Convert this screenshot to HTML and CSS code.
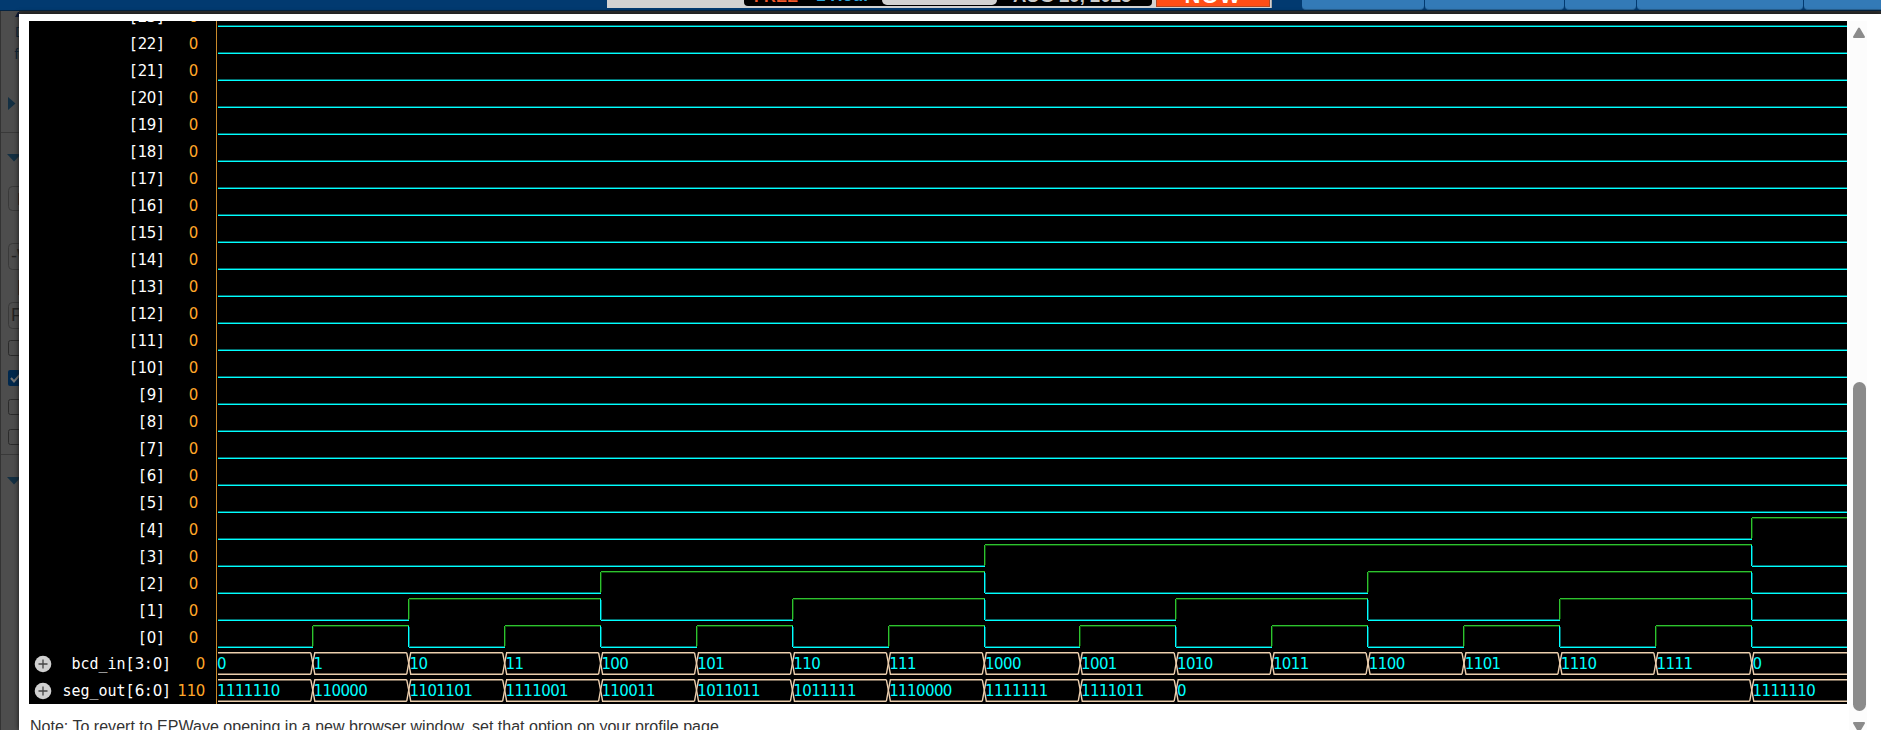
FILE: index.html
```html
<!DOCTYPE html>
<html lang="en">
<head>
<meta charset="utf-8">
<title>EPWave</title>
<link rel="stylesheet" href="styles.css">
</head>
<body>
<header class="topbar">
  <div class="ad">
    <div class="ad-strip"><span class="ad-free">FREE</span><span class="ad-hour">1 Hour</span><span class="ad-pill"></span><span class="ad-date">AUG 29, 2025</span></div>
    <div class="ad-cta"><span>NOW</span></div>
  </div>
  <nav class="tabs"><i class="t1"></i><i class="t2"></i><i class="t3"></i><i class="t4"></i><i class="t5"></i></nav>
</header>
<svg class="sidebar" width="19" height="719" viewBox="0 11 19 719">
  <path d="M.5 11V730" stroke="#333"/>
  <path d="M15 17l3-5h1v5z" fill="#0a1633"/>
  <text x="15" y="37" class="side-link">D</text>
  <text x="14.500" y="59" class="side-link">fi</text>
  <path d="M8 97l7.500 6.500L8 110zM7 154h14l-7 7.500zM7 477h14l-7 7.500z" fill="#132f42"/>
  <path d="M1 132.500H19M1 454.500H19" stroke="#393939"/>
  <g fill="none" stroke="#393939"><rect x="8.500" y="186.500" width="40" height="24" rx="4"/><rect x="8.500" y="243.500" width="40" height="26" rx="4"/><rect x="8.500" y="302.500" width="40" height="26" rx="4"/></g>
  <path d="M18.500 193v12M18.500 280v15" stroke="#402a20"/>
  <text x="11" y="262" class="side-input">-W</text>
  <text x="11" y="321" class="side-input">F</text>
  <g fill="none" stroke="#2b2b2b"><rect x="8.500" y="340.500" width="15" height="15" rx="2"/><rect x="8.500" y="399.500" width="15" height="15" rx="2"/><rect x="8.500" y="429.500" width="15" height="15" rx="2"/></g>
  <rect x="8" y="370" width="16" height="16" rx="2" fill="#00284d"/>
  <path d="M11 378l3 3.500 7-8" stroke="#777" stroke-width="2" fill="none"/>
</svg>
<main class="modal">
  <section class="waves"><div class="rows" id="rows"></div></section>
  <p class="note">Note: To revert to EPWave opening in a new browser window, set that option on your profile page</p>
  <div class="scrollbar">
    <svg class="arrow-up" width="14" height="12" viewBox="0 0 14 12"><path d="M7 1.500L12 10H2z" fill="#8b8b8b" stroke="#8b8b8b" stroke-width="2" stroke-linejoin="round"/></svg>
    <div class="thumb"></div>
    <svg class="arrow-down" width="14" height="12" viewBox="0 0 14 12"><path d="M7 10.500L12 2H2z" fill="#8b8b8b" stroke="#8b8b8b" stroke-width="2" stroke-linejoin="round"/></svg>
  </div>
</main>
<script src="waves.js"></script>
</body>
</html>
```
FILE: styles.css
```css
body { margin: 0; width: 1881px; height: 730px; overflow: hidden; background: #4d4d4d; position: relative; font-family: "Liberation Sans", Arial, sans-serif; }

.topbar { box-sizing: border-box; height: 11px; display: flex; background: #023a70; border-bottom: 1px solid #052442; overflow: hidden; padding-left: 607px; }
.ad { flex: none; box-sizing: border-box; width: 665px; height: 8px; background: #d2d2d2; display: flex; padding-left: 137px; border-right: 1px solid #aaa; overflow: hidden; }
.ad-strip { flex: none; display: flex; width: 408px; height: 6px; background: #000; border-radius: 0 0 4px 4px; overflow: hidden; white-space: nowrap; }
.ad-free, .ad-hour, .ad-date { flex: none; box-sizing: border-box; height: 20px; margin-top: -14px; font-weight: bold; line-height: 20px; }
.ad-free { width: 64px; padding-left: 10px; color: #f2592b; font-size: 16.500px; }
.ad-hour { width: 74px; padding-left: 8px; color: #2ba8e0; font-size: 17px; }
.ad-pill { flex: none; width: 115px; height: 5px; background: #d2d2d2; border-radius: 0 0 9px 9px; }
.ad-date { padding-left: 16px; color: #ccc; font-size: 18.500px; }
.ad-cta { flex: none; box-sizing: border-box; margin-left: 4px; width: 114px; height: 7px; border: 1px solid #b34a25; border-top: 0; background: #ff4e16; color: #fff; text-align: center; overflow: hidden; }
.ad-cta span { display: block; margin-top: -16px; font: bold 22px/24px "Liberation Sans", sans-serif; letter-spacing: 1px; }
.tabs { flex: none; display: flex; gap: 1px; margin-left: 30px; }
.tabs i { height: 10px; background: #337ab7; border-radius: 0 0 4px 4px; box-sizing: border-box; border-bottom: 1px solid #286090; }
.t1 { width: 122px; }
.t2 { width: 139px; }
.t3 { width: 71px; }
.t4 { width: 166px; }
.t5 { width: 90px; }

.sidebar { display: block; }
.side-link { font: 14px "Liberation Sans", sans-serif; fill: #0f2537; }
.side-input { font: 18px "Liberation Sans", sans-serif; fill: #222; }

.modal { position: absolute; left: 19px; top: 14px; width: 1862px; height: 716px; background: #fff; box-shadow: 0 0 5px #111, 0 -3px 0 #303030; box-sizing: border-box; padding: 7px 0 0 10px; }
.waves { width: 1818px; height: 683px; background: #000; overflow: hidden; }
.rows { margin-top: -19px; display: grid; grid-auto-rows: 27px; }
.row { display: grid; height: 27px; }
.row svg { display: block; }
.bits { grid-template-columns: 136px 33px 18px 2px 1629px; }
.bus { grid-template-columns: 28px 114px 34px 11px 2px 1629px; }
.name, .value { box-sizing: border-box; height: 27px; padding-top: 2px; font: 15px/27px "DejaVu Sans Mono", monospace; text-align: right; white-space: pre; }
.bus .name, .bus .value { padding-top: 1px; }
.name { color: #fff; }
.name b, .value { font: 15px/27px "DejaVu Sans", sans-serif; letter-spacing: -.4px; }
.value { color: #ffa629; }
.plus { padding: 5px 0 0 5px; width: 18px; height: 18px; }
.rule { grid-column: -3; width: 1px; background: #c98a2a; }
.wave { grid-column: -2; }
.busval { font: 15px "DejaVu Sans", sans-serif; letter-spacing: -.6px; fill: #0ff; }

.note { margin: 12px 0 0 1px; font: 16.040px/20px "Liberation Sans", Arial, sans-serif; color: #333; }
.scrollbar { position: absolute; left: 1830px; top: 7px; width: 18px; height: 709px; background: #fcfcfc; }
.arrow-up { display: block; margin: 6px 0 0 3px; }
.thumb { width: 13px; height: 329px; margin: 343px 0 0 4px; border-radius: 7px; background: #8b8b8b; }
.arrow-down { display: block; margin: 10px 0 0 3px; }
```
FILE: waves.js
```js
const STEP = 95.93, WIDTH = 1629;
const x = i => i === 0 ? 0 : 95 + STEP * (i - 1);
const digits = s => s.replace(/\d+/g, '<b>$&</b>');
const line = (x1, y1, x2, y2, c) => `<path d="M${x1} ${y1}L${x2} ${y2}" stroke="${c}"/>`;

function bitWave(level) {
  let out = '', prev = 0;
  for (let i = 0; i <= 17; i++) {
    const v = level(i), a = Math.round(x(i)), b = Math.min(WIDTH, Math.round(x(i + 1)));
    const hue = v ? '#2fc22f' : '#0ff', dim = v ? '#0a4d0a' : '#006e6e';
    if (v !== prev) out += line(a - .5, 3, a - .5, 24, hue) + line(a + .5, 4, a + .5, 23, dim);
    const y = v ? 2.5 : 24.5;
    if (b > a) out += line(a, y, b, y, hue) + line(a, v ? y + 1 : y - 1, b, v ? y + 1 : y - 1, dim);
    prev = v;
  }
  return out;
}

function busWave(cells) {
  return cells.map(([i, text], n) => {
    const end = n + 1 < cells.length ? cells[n + 1][0] : 18;
    const a = x(i) - (i ? .2 : 0), b = x(end) - .2;
    const shape = i ? `M${b - 2} 2.800H${a + 2}L${a} 13L${a + 2} 24.200H${b - 2}` : `M0 2.800H${b - 2}M0 24.200H${b - 2}`;
    return `<path d="${shape}M${b - 2} 2.800L${b} 13L${b - 2} 24.200" stroke="#eccfae" stroke-width="1.400" fill="none"/>` +
      `<text class="busval" x="${i ? a + .8 : -1}" y="19">${text}</text>`;
  }).join('');
}

const svg = body => `<svg class="wave" width="1629" height="27" viewBox="0 0 1629 27" overflow="visible">${body}</svg>`;
const plus = `<svg class="plus" viewBox="0 0 18 18"><circle cx="9" cy="9" r="8.300" fill="#d0d0d0"/><path d="M4.500 9h9M9 4.500v9" stroke="#444" stroke-width="1.300"/></svg>`;
let html = '';
for (let k = 23; k >= 0; k--) {
  html += `<div class="row bits"><span class="name">${digits(`[${k}]`)}</span><span class="value">0</span><span class="rule"></span>${svg(bitWave(i => k > 4 ? 0 : (i >> k) & 1))}</div>`;
}
const bcd = Array.from({ length: 17 }, (_, i) => [i, (i % 16).toString(2)]);
const seg = ['1111110', '110000', '1101101', '1111001', '110011', '1011011', '1011111', '1110000', '1111111', '1111011', '0'].map((t, i) => [i, t]);
seg.push([16, '1111110']);
for (const [name, value, cells] of [['bcd_in[3:0]', '0', bcd], ['seg_out[6:0]', '110', seg]]) {
  html += `<div class="row bus">${plus}<span class="name">${digits(name)}</span><span class="value">${value}</span><span class="rule"></span>${svg(busWave(cells))}</div>`;
}
document.getElementById('rows').innerHTML = html;
```
